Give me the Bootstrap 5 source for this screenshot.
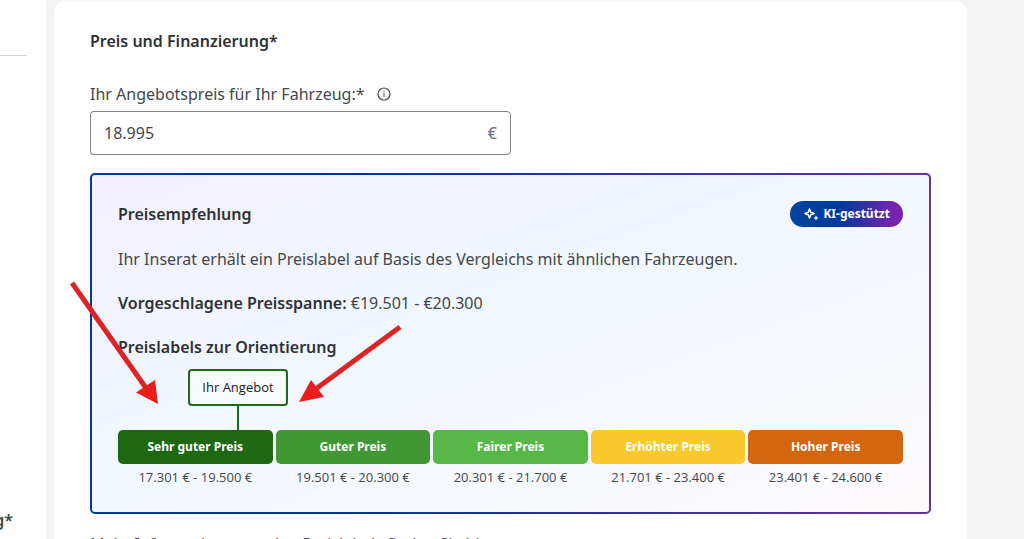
<!DOCTYPE html>
<html lang="de">
<head>
<meta charset="utf-8">
<meta name="viewport" content="width=device-width, initial-scale=1">
<title>Preis und Finanzierung</title>
<link href="https://cdn.jsdelivr.net/npm/bootstrap@5.3.0/dist/css/bootstrap.min.css" rel="stylesheet">
<style>
  body { font-family: "Noto Sans", "Open Sans", sans-serif; font-size: 16px; line-height: 24px; color: #45484b; background: #f3f3f3; }
  h1, h2, h3, strong { font-size: 16px; line-height: 24px; font-weight: 600; color: #2f3235; }
  .side-strip { width: 46px; flex: none; padding: 55px 19px 0 0; }
  .side-strip hr { margin: 0 0 452px; border-color: #aaa; }
  .side-label { margin-right: -6px; padding-right: 20px; font-weight: 600; }
  .form-panel { margin: 1px 57px 0 8px; padding: 28px 36px 0; border-radius: 12px 12px 0 0; }
  .label-row { gap: 12px; margin-top: 29px; margin-bottom: 5px; }
  .price-field { max-width: 421px; margin-bottom: 18px; }
  .price-field .form-control { height: 44px; font-size: 16px; padding: 0 13px; color: #45484b; border-color: #808285; border-radius: 4px 0 0 4px; border-right: 0; }
  .price-field .input-group-text { font-size: 16px; padding: 0 13px; background: #fff; color: #6b6d70; border-color: #808285; border-radius: 0 4px 4px 0; }
  .advice {
    padding: 26px 26px 22px; border: 2px solid transparent; border-radius: 5px;
    background: linear-gradient(160deg, #f3effb 0%, #f1f7fe 40%, #f6f9fe 70%, #fdf9fb 100%) padding-box,
                linear-gradient(90deg, #003a96 0%, #00349a 30%, #6a3396 100%) border-box;
  }
  .advice-head { margin-bottom: 20px; }
  .advice p { margin-bottom: 20px; }
  .advice h3 { margin-bottom: 10px; }
  .ki-badge { height: 26px; gap: 4px; padding: 0 13px 0 14px; font-size: 12px; line-height: 26px; font-weight: 700; color: #fff; background: linear-gradient(100deg, #0044a0 0%, #0039a0 45%, #7623b0 90%); }
  .offer-pin { margin-left: 70px; width: 100px; }
  .offer-box { width: 100px; height: 37px; border: 2px solid #1d6a1b; border-radius: 4px; font-family: "Open Sans", "Noto Sans", sans-serif; font-size: 13px; line-height: 33px; color: #1e2022; background: #f8fbff; }
  .offer-stem { width: 2px; height: 24px; background: #1d6a1b; }
  .scale { gap: 3px; }
  .scale-step { flex: 1 1 0; font-family: "Open Sans", "Noto Sans", sans-serif; font-size: 13px; line-height: 26px; }
  .scale-bar { height: 34px; font-family: "Noto Sans", sans-serif; font-size: 12px; line-height: 34px; border-radius: 5px; color: #fff; font-weight: 700; }
  .c1 { background: #1d6811; } .c2 { background: #419733; } .c3 { background: #58b847; } .c4 { background: #f9c82b; } .c5 { background: #d36711; }
  .arrows { left: -24px; top: 105px; pointer-events: none; }
  .more-info { margin-top: 18px; }
</style>
</head>
<body>
<div class="d-flex vh-100 overflow-hidden">
  <aside class="side-strip bg-white overflow-hidden">
    <hr class="opacity-50">
    <div class="side-label d-flex justify-content-end">g*</div>
  </aside>
  <main class="form-panel bg-white flex-grow-1">
    <h1 class="mb-0">Preis und Finanzierung*</h1>
    <div class="label-row d-flex align-items-center">
      <label for="price">Ihr Angebotspreis für Ihr Fahrzeug:*</label>
      <svg width="14" height="14" viewBox="0 0 14 14" fill="none" stroke="#4d4f52" aria-hidden="true"><circle cx="7" cy="7" r="6" stroke-width="1.2"/><path d="M7 6v4M7 3.6v1.2"/></svg>
    </div>
    <div class="input-group price-field">
      <input id="price" class="form-control" type="text" value="18.995">
      <span class="input-group-text">€</span>
    </div>
    <section class="advice position-relative">
      <div class="advice-head d-flex justify-content-between align-items-center">
        <h2 class="mb-0">Preisempfehlung</h2>
        <span class="ki-badge rounded-pill d-flex align-items-center">
          <svg width="15" height="14" viewBox="0 0 15 14" aria-hidden="true"><path d="M5.500 2 6.800 5.200 10 6.500 6.800 7.800 5.500 11 4.200 7.800 1 6.500 4.200 5.200z" fill="none" stroke="#fff" stroke-width="1.600" stroke-linejoin="round"/><path d="M12 8.200 12.800 10.200 14.800 11 12.800 11.800 12 13.800 11.200 11.800 9.200 11 11.200 10.200z" fill="#fff"/></svg>
          KI-gestützt
        </span>
      </div>
      <p>Ihr Inserat erhält ein Preislabel auf Basis des Vergleichs mit ähnlichen Fahrzeugen.</p>
      <p><strong>Vorgeschlagene Preisspanne:</strong> €19.501 - €20.300</p>
      <h3>Preislabels zur Orientierung</h3>
      <div class="offer-pin d-flex flex-column align-items-center">
        <div class="offer-box text-center">Ihr Angebot</div>
        <div class="offer-stem"></div>
      </div>
      <div class="scale d-flex text-center">
        <div class="scale-step"><div class="scale-bar c1">Sehr guter Preis</div>17.301 € - 19.500 €</div>
        <div class="scale-step"><div class="scale-bar c2">Guter Preis</div>19.501 € - 20.300 €</div>
        <div class="scale-step"><div class="scale-bar c3">Fairer Preis</div>20.301 € - 21.700 €</div>
        <div class="scale-step"><div class="scale-bar c4">Erhöhter Preis</div>21.701 € - 23.400 €</div>
        <div class="scale-step"><div class="scale-bar c5">Hoher Preis</div>23.401 € - 24.600 €</div>
      </div>
      <svg class="arrows position-absolute" width="340" height="130" viewBox="68 280 340 130" aria-hidden="true">
        <g stroke="#dc2426" stroke-width="5"><path d="M72 283 146 388"/><path d="M400 327 313 391"/></g>
        <g fill="#ec1c1c"><path d="M158 404 136 392.500 155 380z"/><path d="M299 402 311 380 324 397z"/></g>
      </svg>
    </section>
    <p class="more-info mb-0">Mehr Informationen zu den Preislabels finden Sie hier</p>
  </main>
</div>
<script src="https://cdn.jsdelivr.net/npm/bootstrap@5.3.0/dist/js/bootstrap.bundle.min.js"></script>
</body>
</html>
